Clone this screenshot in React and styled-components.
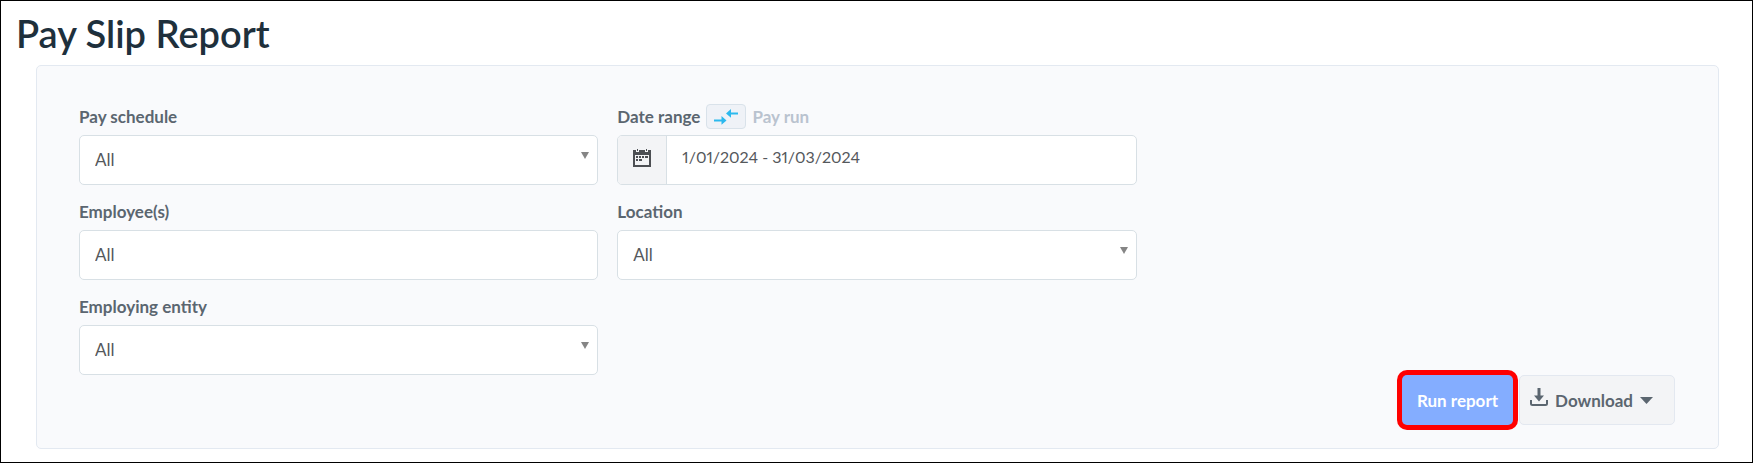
import React from 'react'
import styled, { createGlobalStyle } from 'styled-components'

const GlobalStyle = createGlobalStyle`
    * {
        box-sizing: border-box;
    }
    body {
        margin: 0;
        background: #ffffff;
        font-family: Lato, "Liberation Sans", sans-serif;
        font-size: 17px;
        font-variant-numeric: proportional-nums;
        color: #5b6670;
    }
    button, input, select {
        font: inherit;
        font-variant-numeric: inherit;
        color: inherit;
    }
`

const Page = styled.main`
    border: 1px solid #000000;
    padding: 7px 33px 13px 35px;
`

const Title = styled.h1`
    margin: 0 0 7px -20px;
    font-size: 38px;
    line-height: 50px;
    font-weight: 600;
    color: #1e303c;
`

const Panel = styled.form`
    padding: 38px 43px 23px 42px;
    background: #f9fafc;
    border: 1px solid #e3e9f1;
    border-radius: 5px;
`

const Filters = styled.div`
    display: grid;
    grid-template-columns: repeat(3, 1fr);
    gap: 14px 19px;
`

const Field = styled.div`
    grid-column: ${props => props.$column};
`

const LabelRow = styled.div`
    display: flex;
    align-items: center;
    gap: 6px;
    height: 25px;
    margin-bottom: 6px;
    font-weight: 700;
`

const SwitchButton = styled.button`
    display: flex;
    align-items: center;
    justify-content: center;
    width: 40px;
    height: 25px;
    padding: 0;
    background: #eff2f7;
    border: 1px solid #d9e2ea;
    border-radius: 4px;
`

const Muted = styled.span`
    color: #b9c3cf;
`

const Control = styled.div`
    position: relative;
    display: flex;
    height: 50px;
    overflow: hidden;
    background: #ffffff;
    border: 1px solid #d8e0e5;
    border-radius: 5px;
`

const Select = styled.select`
    appearance: none;
    width: 100%;
    padding: 0 15px 2px;
    border: 0;
    background: transparent;
    color: #55585c;
`

const Input = styled.input`
    flex: 1;
    min-width: 0;
    padding: 0 15px 2px;
    border: 0;
    background: transparent;
    color: #55585c;
`

const DateInput = styled(Input)`
    padding-bottom: 7px;
    font-size: 16px;
`

const Arrow = styled.svg`
    position: absolute;
    top: 16px;
    right: 8px;
    pointer-events: none;
`

const Addon = styled.span`
    display: flex;
    align-items: center;
    justify-content: center;
    width: 49px;
    padding-bottom: 4px;
    background: #f3f4f6;
    border-right: 1px solid #d8e0e5;
`

const Actions = styled.div`
    display: flex;
    justify-content: flex-end;
    gap: 6px;
`

const Button = styled.button`
    display: flex;
    align-items: center;
    height: 50px;
    border-radius: 5px;
    font-weight: 700;
`

const RunButton = styled(Button)`
    padding: 0 15px;
    border: 0;
    background: #84adff;
    box-shadow: 0 0 0 5px #ff0000;
    color: #ffffff;
`

const DownloadButton = styled(Button)`
    gap: 7px;
    padding: 0 21px 0 10px;
    border: 1px solid #e3e8f0;
    background: #f3f4f6;
    color: #5b6670;
`

const SwitchIcon = () => (
    <svg width="24" height="16" viewBox="0 0 24 16" fill="#2cb9ee" aria-hidden="true">
        <path d="M0 10.4h7.5V7l5 4.4-5 4.4v-3.4H0z" />
        <path d="M24 3.4h-7V0l-5 4.4 5 4.4V5.4h7z" />
    </svg>
)

const CalendarIcon = () => (
    <svg width="18" height="18" viewBox="0 0 18 18" fill="#4c4f53" aria-hidden="true">
        <path fillRule="evenodd" d="M0 1h3v2h3V1h6v2h3V1h3v17H0zM2 6v10h14V6z" />
        <path d="M4 0h1v2H4zM13 0h1v2h-1z" />
        <path d="M3 7h2v2H3zM6 7h2v2H6zM9 7h2v2H9zM12 7h3v2h-3zM3 10h2v2H3zM6 10h3v2H6z" />
    </svg>
)

const DownloadIcon = () => (
    <svg width="18" height="24" viewBox="0 0 18 24" aria-hidden="true">
        <path d="M9 0v9" stroke="#5b6670" strokeWidth="3" />
        <path d="M4 7.5h10L9 13.5z" fill="#5b6670" />
        <path d="M1 12v3.5q0 1.5 1.5 1.5h13q1.5 0 1.5-1.5V12" fill="none" stroke="#5b6670" strokeWidth="2" />
    </svg>
)

const SelectField = ({ id, label, column }) => (
    <Field $column={column}>
        <LabelRow>
            <label htmlFor={id}>{label}</label>
        </LabelRow>
        <Control>
            <Select id={id}>
                <option>All</option>
            </Select>
            <Arrow width="8" height="7" viewBox="0 0 8 7" aria-hidden="true">
                <path d="M0 0h8L4 7z" fill="#858585" />
            </Arrow>
        </Control>
    </Field>
)

export default function App() {
    return (
        <>
            <GlobalStyle />
            <Page>
                <Title>Pay Slip Report</Title>
                <Panel onSubmit={e => e.preventDefault()}>
                    <Filters>
                        <SelectField id="schedule" label="Pay schedule" column={1} />
                        <Field $column={2}>
                            <LabelRow>
                                <label htmlFor="dates">Date range</label>
                                <SwitchButton type="button" aria-labelledby="payrun">
                                    <SwitchIcon />
                                </SwitchButton>
                                <Muted id="payrun">Pay run</Muted>
                            </LabelRow>
                            <Control>
                                <Addon>
                                    <CalendarIcon />
                                </Addon>
                                <DateInput id="dates" defaultValue="1/01/2024 - 31/03/2024" />
                            </Control>
                        </Field>
                        <Field $column={1}>
                            <LabelRow>
                                <label htmlFor="employees">Employee(s)</label>
                            </LabelRow>
                            <Control>
                                <Input id="employees" defaultValue="All" />
                            </Control>
                        </Field>
                        <SelectField id="location" label="Location" column={2} />
                        <SelectField id="entity" label="Employing entity" column={1} />
                    </Filters>
                    <Actions>
                        <RunButton type="submit">Run report</RunButton>
                        <DownloadButton type="button">
                            <DownloadIcon />
                            Download
                            <svg width="13" height="7" viewBox="0 0 13 7" aria-hidden="true">
                                <path d="M0 0h13L6.5 7z" fill="#5b6670" />
                            </svg>
                        </DownloadButton>
                    </Actions>
                </Panel>
            </Page>
        </>
    )
}
